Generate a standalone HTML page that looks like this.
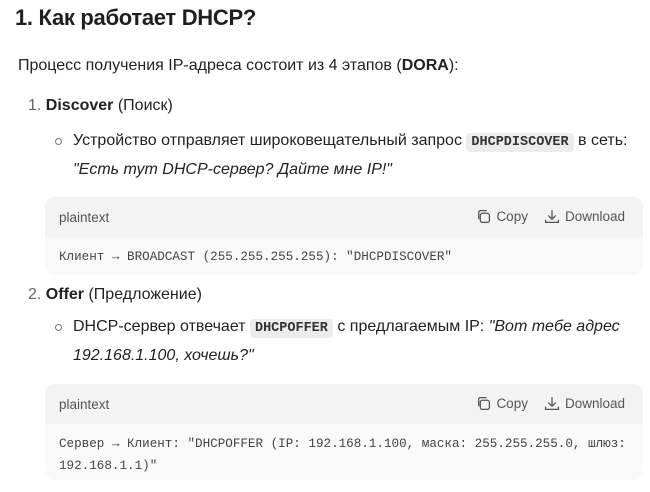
<!DOCTYPE html>
<html><head><meta charset="utf-8"><style>
*{margin:0;padding:0;box-sizing:border-box}
body{width:650px;height:492px;overflow:hidden;background:#fff;font-family:"Liberation Sans",sans-serif;color:#222;position:relative}
.a{position:absolute;white-space:nowrap}
h1{position:absolute;left:15px;top:5px;font-size:22px;font-weight:bold;color:#1f1f1f;letter-spacing:-0.3px}
.t{font-size:16px;letter-spacing:0px}
.code{background:#ececec;border-radius:4px;padding:2px 5px;font-family:"Liberation Mono",monospace;font-size:13.5px;font-weight:bold;color:#333}
.blk{position:absolute;left:45px;width:598px;border-radius:10px;overflow:hidden;background:#f9f9f9}
.hd{height:40px;background:#f3f3f3;position:relative;font-size:13.5px;color:#555}
.hd .l{position:absolute;left:14px;top:13px}
.hd .r{position:absolute;right:18px;top:12px;display:flex;gap:16px;align-items:center}
.hd .r span{display:flex;align-items:center;gap:5px}
pre{font-family:"Liberation Mono",monospace;font-size:12.6px;color:#444;padding:9px 14px;line-height:22px}
.bul{position:absolute;width:7px;height:7px;border:1px solid #777;border-radius:50%}
</style></head><body>
<h1>1. Как работает DHCP?</h1>
<div class="a t" style="left:18px;top:57px">Процесс получения IP-адреса состоит из 4 этапов (<b>DORA</b>):</div>
<div class="a t" style="left:28px;top:97px"><span style="color:#666">1.</span> <b>Discover</b> (Поиск)</div>
<div class="bul" style="left:55px;top:138px"></div>
<div class="a t" style="left:73px;top:132px">Устройство отправляет широковещательный запрос <span class="code">DHCPDISCOVER</span> в сеть:</div>
<div class="a t" style="left:73px;top:161px;font-style:italic">"Есть тут DHCP-сервер? Дайте мне IP!"</div>
<div class="blk" style="top:197px;height:78px">
<div class="hd"><span class="l">plaintext</span><div class="r"><span><svg width="15" height="15" viewBox="0 0 14 14" fill="none" stroke="#555" stroke-width="1.2"><rect x="4" y="4" width="8.5" height="8.5" rx="2"/><path d="M2.5 9.5V3a1.5 1.5 0 0 1 1.5-1.5h6"/></svg>Copy</span><span><svg width="16" height="15" viewBox="0 0 15 14" fill="none" stroke="#555" stroke-width="1.2"><path d="M7.5 1v8M4 6l3.5 3.5L11 6M1.5 10v2.5h12V10"/></svg>Download</span></div></div>
<pre>Клиент → BROADCAST (255.255.255.255): "DHCPDISCOVER"</pre>
</div>
<div class="a t" style="left:28px;top:286px"><span style="color:#666">2.</span> <b>Offer</b> (Предложение)</div>
<div class="bul" style="left:55px;top:324px"></div>
<div class="a t" style="left:73px;top:318px">DHCP-сервер отвечает <span class="code">DHCPOFFER</span> с предлагаемым IP: <i>"Вот тебе адрес</i></div>
<div class="a t" style="left:73px;top:347px;font-style:italic">192.168.1.100, хочешь?"</div>
<div class="blk" style="top:384px;height:96px">
<div class="hd"><span class="l">plaintext</span><div class="r"><span><svg width="15" height="15" viewBox="0 0 14 14" fill="none" stroke="#555" stroke-width="1.2"><rect x="4" y="4" width="8.5" height="8.5" rx="2"/><path d="M2.5 9.5V3a1.5 1.5 0 0 1 1.5-1.5h6"/></svg>Copy</span><span><svg width="16" height="15" viewBox="0 0 15 14" fill="none" stroke="#555" stroke-width="1.2"><path d="M7.5 1v8M4 6l3.5 3.5L11 6M1.5 10v2.5h12V10"/></svg>Download</span></div></div>
<pre>Сервер → Клиент: "DHCPOFFER (IP: 192.168.1.100, маска: 255.255.255.0, шлюз:
192.168.1.1)"</pre>
</div>
</body></html>
